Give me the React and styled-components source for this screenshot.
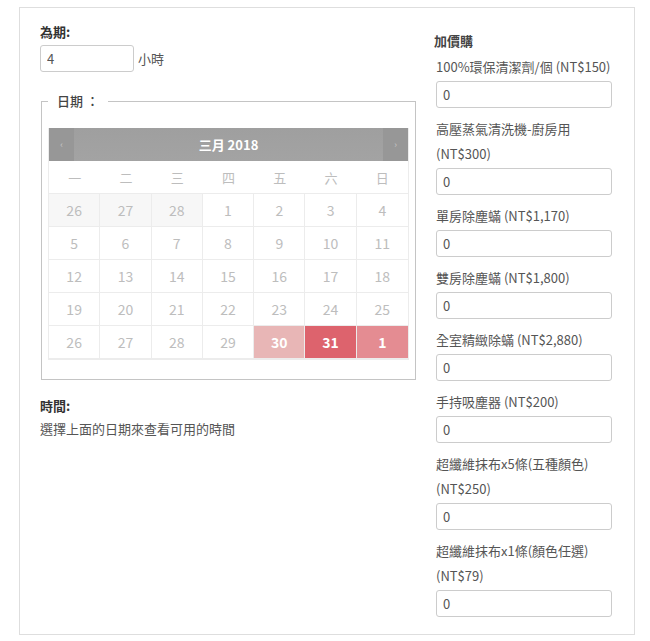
import React from "react";
import styled, { createGlobalStyle } from "styled-components";

const GlobalStyle = createGlobalStyle`
  body {
    margin: 0;
    background: #fff;
    font-family: "Noto Sans CJK TC", "Noto Sans", sans-serif;
    color: #555;
  }
`;

const weekdays = ["一", "二", "三", "四", "五", "六", "日"];

const weeks = [
  [26, 27, 28, 1, 2, 3, 4],
  [5, 6, 7, 8, 9, 10, 11],
  [12, 13, 14, 15, 16, 17, 18],
  [19, 20, 21, 22, 23, 24, 25],
  [26, 27, 28, 29, 30, 31, 1],
];

const highlight = { "4-4": "light", "4-5": "strong", "4-6": "mid" };

const extras = [
  ["100%環保清潔劑/個 (NT$150)"],
  ["高壓蒸氣清洗機-廚房用", "(NT$300)"],
  ["單房除塵蟎 (NT$1,170)"],
  ["雙房除塵蟎 (NT$1,800)"],
  ["全室精緻除蟎 (NT$2,880)"],
  ["手持吸塵器 (NT$200)"],
  ["超纖維抹布x5條(五種顏色)", "(NT$250)"],
  ["超纖維抹布x1條(顏色任選)", "(NT$79)"],
];

function App() {
  return (
    <>
      <GlobalStyle />
      <Card>
        <LeftColumn>
          <Heading>為期:</Heading>
          <DurationRow>
            <DurationInput defaultValue="4" />
            <Unit>小時</Unit>
          </DurationRow>

          <DateFieldset>
            <Legend>日期 ：</Legend>
            <Calendar>
              <CalHeader>
                <NavButton>‹</NavButton>
                <MonthTitle>三月 2018</MonthTitle>
                <NavButton>›</NavButton>
              </CalHeader>
              <Grid>
                {weekdays.map((d) => (
                  <Weekday key={d}>{d}</Weekday>
                ))}
                {weeks.map((week, w) =>
                  week.map((day, i) => (
                    <Day
                      key={w + "-" + i}
                      $muted={w === 0 && i < 3}
                      $tone={highlight[w + "-" + i]}
                      $last={i === 6}
                    >
                      {day}
                    </Day>
                  ))
                )}
              </Grid>
            </Calendar>
          </DateFieldset>

          <TimeHeading>時間:</TimeHeading>
          <Hint>選擇上面的日期來查看可用的時間</Hint>
        </LeftColumn>

        <RightColumn>
          <ExtraHeading>加價購</ExtraHeading>
          {extras.map((lines, i) => (
            <Item key={i} $first={i === 0}>
              {lines.map((l) => (
                <ItemLabel key={l}>{l}</ItemLabel>
              ))}
              <QtyInput defaultValue="0" />
            </Item>
          ))}
        </RightColumn>
      </Card>
    </>
  );
}

export default App;

const Card = styled.div`
  box-sizing: border-box;
  margin: 7px 0 0 19px;
  width: 616px;
  height: 628px;
  border: 1px solid #dedede;
  padding: 14px 0 0 20px;
  display: flex;
  gap: 18px;
`;

const LeftColumn = styled.div`
  width: 376px;
  display: flex;
  flex-direction: column;
`;

const Heading = styled.div`
  font-size: 13px;
  font-weight: bold;
  line-height: 20px;
  color: #333;
`;

const DurationRow = styled.div`
  display: flex;
  align-items: center;
  margin-top: 3px;
`;

const DurationInput = styled.input`
  box-sizing: border-box;
  width: 94px;
  height: 27px;
  border: 1px solid #ccc;
  border-radius: 3px;
  padding: 0 6px;
  font-family: inherit;
  font-size: 13px;
  color: #555;
  outline: none;
`;

const Unit = styled.span`
  font-size: 13px;
  color: #555;
  margin-left: 4px;
`;

const DateFieldset = styled.fieldset`
  margin: 19px 0 0 1px;
  padding: 0 6px 19px;
  border: 1px solid #c4c4c4;
  min-width: 0;
`;

const Legend = styled.legend`
  padding: 0 9px;
  font-size: 13px;
  line-height: 20px;
  color: #444;
  font-weight: 500;
`;

const Calendar = styled.div`
  margin-top: 17px;
  width: 361px;
  border: 1px solid #ececec;
  border-top: none;
  box-sizing: border-box;
`;

const CalHeader = styled.div`
  height: 33px;
  display: flex;
  align-items: stretch;
  background: linear-gradient(#9f9f9f, #a3a3a3);
  border-radius: 2px 2px 0 0;
`;

const NavButton = styled.div`
  width: 25px;
  display: flex;
  align-items: center;
  justify-content: center;
  background: #979797;
  color: #c8c8c8;
  font-size: 9px;
`;

const MonthTitle = styled.div`
  flex: 1;
  display: flex;
  align-items: center;
  justify-content: center;
  color: #fff;
  font-size: 13px;
  font-weight: bold;
`;

const Grid = styled.div`
  display: grid;
  grid-template-columns: repeat(7, 1fr);
  grid-auto-rows: 33px;
`;

const Weekday = styled.div`
  display: flex;
  align-items: center;
  justify-content: center;
  font-size: 13px;
  color: #bdbdbd;
  border-bottom: 1px solid #ececec;
`;

const toneColors = {
  light: "#e8b6b6",
  strong: "#dd636d",
  mid: "#e48c92",
};

const Day = styled.div`
  display: flex;
  align-items: center;
  justify-content: center;
  font-size: 14px;
  color: ${(p) => (p.$tone ? "#fff" : "#bdbdbd")};
  font-weight: ${(p) => (p.$tone ? "bold" : "normal")};
  background: ${(p) =>
    p.$tone ? toneColors[p.$tone] : p.$muted ? "#f7f7f7" : "#fff"};
  border-right: ${(p) => (p.$last ? "none" : "1px solid #ececec")};
  border-bottom: 1px solid #ececec;
`;

const TimeHeading = styled(Heading)`
  margin-top: 16px;
`;

const Hint = styled.div`
  font-size: 13px;
  line-height: 20px;
  color: #555;
  margin-top: 3px;
`;

const RightColumn = styled.div`
  width: 178px;
  display: flex;
  flex-direction: column;
`;

const ExtraHeading = styled.div`
  font-size: 13px;
  font-weight: bold;
  line-height: 26px;
  color: #444;
  margin-top: 6px;
`;

const Item = styled.div`
  margin: ${(p) => (p.$first ? "0" : "8px")} 0 0 2px;
  display: flex;
  flex-direction: column;
`;

const ItemLabel = styled.div`
  font-size: 13px;
  line-height: 25px;
  color: #555;
  white-space: nowrap;
`;

const QtyInput = styled.input`
  box-sizing: border-box;
  width: 176px;
  height: 27px;
  margin-top: 2px;
  border: 1px solid #ccc;
  border-radius: 3px;
  padding: 0 6px;
  font-family: inherit;
  font-size: 13px;
  color: #555;
  outline: none;
`;
